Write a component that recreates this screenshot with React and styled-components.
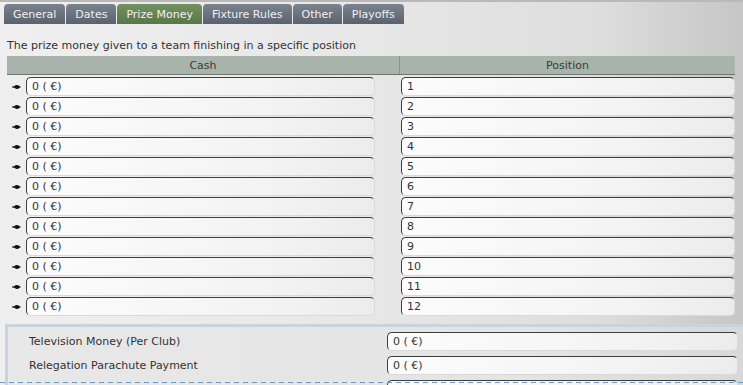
import React from 'react'
import styled, { createGlobalStyle } from 'styled-components'

const GlobalStyle = createGlobalStyle`
  html, body {
    margin: 0;
    padding: 0;
    overflow: hidden;
  }
  body {
    font-family: 'DejaVu Sans', Verdana, sans-serif;
    font-size: 11px;
    color: #333;
  }
`

const tabs = ['General', 'Dates', 'Prize Money', 'Fixture Rules', 'Other', 'Playoffs']
const rows = Array.from({ length: 12 }, (_, i) => i + 1)

const Arrow = () => (
  <svg width='9' height='6' viewBox='0 0 9 6'>
    <path d='M0 2.6 L2.2 2.2 Q4 0.6 6 1.3 L9 3 L6 4.7 Q4 5.4 2.2 3.8 L0 3.4 Z' fill='#111' />
  </svg>
)

const App = () => {
  return (
    <Page>
      <GlobalStyle />
      <TabBar>
        {tabs.map(t => (
          <Tab key={t} $active={t === 'Prize Money'}>{t}</Tab>
        ))}
      </TabBar>

      <Description>The prize money given to a team finishing in a specific position</Description>

      <Table>
        <HeaderRow>
          <HeaderCell>Cash</HeaderCell>
          <HeaderCell>Position</HeaderCell>
        </HeaderRow>
        <Rows>
          {rows.map(n => (
            <Row key={n}>
              <Marker><Arrow /></Marker>
              <Field $w={349}>0 ( €)</Field>
              <Field $w={334} $gap={26}>{n}</Field>
            </Row>
          ))}
        </Rows>
      </Table>

      <Panel>
        <PanelRow>
          <Label>Television Money (Per Club)</Label>
          <Field $w={351}>0 ( €)</Field>
        </PanelRow>
        <PanelRow>
          <Label>Relegation Parachute Payment</Label>
          <Field $w={351}>0 ( €)</Field>
        </PanelRow>
        <PanelRow>
          <Label />
          <Field $w={351} />
        </PanelRow>
        <Dashed />
      </Panel>
    </Page>
  )
}

export default App

const Page = styled.div`
  width: 743px;
  height: 385px;
  box-sizing: border-box;
  overflow: hidden;
  position: relative;
  border-top: 2px solid #b9b9b9;
  background: linear-gradient(to right, #efefef 0%, #e8e8e8 45%, #dedede 80%, #c6c6c6 100%);
`
const TabBar = styled.div`
  display: flex;
  gap: 1px;
  padding: 2px 0 0 4px;
  height: 20px;
`
const Tab = styled.div`
  height: 20px;
  box-sizing: border-box;
  padding: 0 9px;
  display: flex;
  align-items: center;
  border-radius: 4px 4px 0 0;
  color: #eef0f2;
  font-size: 11px;
  background: ${p =>
    p.$active
      ? 'linear-gradient(#73915f, #58774a)'
      : 'linear-gradient(#7a838e, #59626d)'};
`
const Description = styled.div`
  margin: 15px 0 0 7px;
  height: 13px;
  line-height: 13px;
  color: #333;
`
const Table = styled.div`
  margin: 4px 0 0 7px;
  width: 728px;
`
const HeaderRow = styled.div`
  display: grid;
  grid-template-columns: 393px 335px;
  height: 18px;
  border-bottom: 1px solid #6f7771;
  background: repeating-linear-gradient(90deg, #a5b2a8 0px, #a5b2a8 1px, #aab6ad 1px, #aab6ad 2px);
`
const HeaderCell = styled.div`
  display: flex;
  align-items: center;
  justify-content: center;
  color: #3a3a3a;
  border-right: 1px solid #88918a;
  &:last-child {
    border-right: none;
  }
`
const Rows = styled.div`
  padding-top: 2px;
`
const Row = styled.div`
  display: flex;
  height: 20px;
  align-items: flex-start;
`
const Marker = styled.div`
  width: 19px;
  height: 19px;
  box-sizing: border-box;
  display: flex;
  align-items: center;
  padding-left: 5px;
`
const Field = styled.div`
  width: ${p => p.$w}px;
  margin-left: ${p => p.$gap || 0}px;
  height: 19px;
  box-sizing: border-box;
  display: flex;
  align-items: center;
  padding-left: 5px;
  border: 1px solid #dadada;
  border-top-color: #3e3e3e;
  border-left-color: #3e3e3e;
  border-radius: 5px;
  background: linear-gradient(to right, #fcfcfc, #f3f3f3 70%, #ececec);
  color: #333;
`
const Panel = styled.div`
  position: relative;
  margin: 7px 0 0 5px;
  height: 60px;
  border-top: 3px solid #c9d3e0;
  border-left: 3px solid #c9d3e0;
  background: linear-gradient(to right, #e8e8e8 0%, #e4e4e4 70%, #d8d8d8 100%);
  padding-top: 5px;
`
const PanelRow = styled.div`
  display: flex;
  height: 24px;
  align-items: flex-start;
`
const Label = styled.div`
  width: 379px;
  height: 19px;
  line-height: 19px;
  padding-left: 21px;
  box-sizing: border-box;
  color: #333;
`
const Dashed = styled.div`
  position: absolute;
  left: -8px;
  right: 0;
  top: 55px;
  height: 1px;
  background: repeating-linear-gradient(90deg, #6a9bc4 0px, #6a9bc4 5px, transparent 5px, transparent 9px);
`
